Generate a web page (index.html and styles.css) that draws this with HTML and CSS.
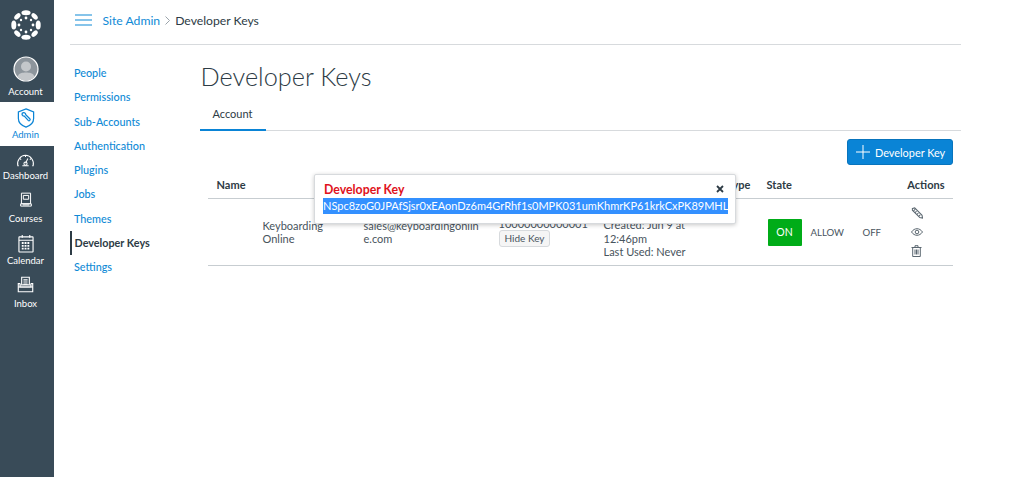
FILE: index.html
```html
<!DOCTYPE html>
<html lang="en">
<head>
<meta charset="utf-8">
<title>Developer Keys</title>
<link rel="stylesheet" href="styles.css">
</head>
<body>
<div class="app">
  <nav class="rail">
    <div class="rail-logo">
      <svg width="30" height="30" viewBox="0 0 30 30" fill="#fff">
        <g id="spokes">
          <ellipse cx="15" cy="2.800" rx="4.600" ry="2.500"/>
          <ellipse cx="15" cy="27.200" rx="4.600" ry="2.500"/>
          <ellipse cx="2.800" cy="15" rx="2.500" ry="4.600"/>
          <ellipse cx="27.200" cy="15" rx="2.500" ry="4.600"/>
          <ellipse cx="6.400" cy="6.400" rx="3.800" ry="2.300" transform="rotate(-45 6.400 6.400)"/>
          <ellipse cx="23.600" cy="6.400" rx="3.800" ry="2.300" transform="rotate(45 23.600 6.400)"/>
          <ellipse cx="6.400" cy="23.600" rx="3.800" ry="2.300" transform="rotate(45 6.400 23.600)"/>
          <ellipse cx="23.600" cy="23.600" rx="3.800" ry="2.300" transform="rotate(-45 23.600 23.600)"/>
          <circle cx="15" cy="8" r="1.400"/>
          <circle cx="15" cy="22" r="1.400"/>
          <circle cx="8" cy="15" r="1.400"/>
          <circle cx="22" cy="15" r="1.400"/>
          <circle cx="10" cy="10" r="1.200"/>
          <circle cx="20" cy="10" r="1.200"/>
          <circle cx="10" cy="20" r="1.200"/>
          <circle cx="20" cy="20" r="1.200"/>
        </g>
      </svg>
    </div>
    <a class="rail-item rail-account">
      <svg class="avatar" width="26" height="26" viewBox="0 0 26 26"><circle cx="13" cy="13" r="12" fill="#8d959c" stroke="#fff" stroke-width="1.200"/><circle cx="13" cy="10.500" r="5" fill="#c4c7ca"/><path d="M4.500 21c1-4 5-4.500 8.500-4.500s7.500.5 8.500 4.500a12 12 0 0 1-17 0z" fill="#c4c7ca"/></svg>
      <span>Account</span>
    </a>
    <a class="rail-item rail-active">
      <svg width="18" height="20" viewBox="0 0 18 21" fill="none" stroke="#0a84d6" stroke-width="1.300"><path d="M9 1l8 3v7c0 4-3.500 7.500-8 9-4.500-1.500-8-5-8-9V4z"/><path d="M5 5.500a2.200 2.200 0 0 1 3.500.5l.2 1 4.300 4.300a1.200 1.200 0 0 1-1.700 1.700L7.200 8.500 6 8.300A2.200 2.200 0 0 1 5 5.500z"/></svg>
      <span>Admin</span>
    </a>
    <a class="rail-item">
      <svg class="ic-dash" width="19" height="13" viewBox="0 0 24 15" fill="none" stroke="#fff" stroke-width="1.300"><path d="M3.500 14H2.300A10.500 10.500 0 0 1 12 1a10.500 10.500 0 0 1 9.700 13h-1.200M8 14h8"/><path d="M12 11l3-6M12 1v2M5 5l1.500 1.500M19 5l-1.500 1.500"/><circle cx="12" cy="11.500" r="2"/></svg>
      <span>Dashboard</span>
    </a>
    <a class="rail-item">
      <svg class="ic-course" width="14" height="16" viewBox="0 0 16 21" fill="none" stroke="#fff" stroke-width="1.300"><path d="M2 1.500h12v14H2zM1 15.500h14v3H1z"/><path d="M4.500 4.500h7v5h-7z"/><path d="M4 17h8"/></svg>
      <span>Courses</span>
    </a>
    <a class="rail-item">
      <svg class="ic-cal" width="16" height="19" viewBox="0 0 17 20" fill="none" stroke="#fff" stroke-width="1.200"><rect x="1" y="3" width="15" height="16" rx=".5"/><path d="M1 6.500h15M4.500 1v3M12.500 1v3"/><path d="M4 9.500h9M4 12.500h9M4 15.500h9" stroke-width="2" stroke-dasharray="2 1"/></svg>
      <span>Calendar</span>
    </a>
    <a class="rail-item">
      <svg class="ic-inbox" width="17" height="17" viewBox="0 0 19 20" fill="none" stroke="#fff" stroke-width="1.300"><path d="M5 10V1.500h9V10M7 4.500h5M7 7h5M7 9.500h5"/><path d="M3.500 9H1v9.500h17V9h-2.500M1 13h17"/><path d="M3 10.500h13V13H3z"/></svg>
      <span>Inbox</span>
    </a>
  </nav>
  <div class="page">
    <header class="crumbs">
      <svg class="burger" width="17" height="12" viewBox="0 0 17 12" fill="none" stroke="#0f8ad6" stroke-width="1.200"><path d="M0 1h17M0 6h17M0 11h17"/></svg>
      <a class="crumb-link">Site Admin</a>
      <svg class="crumb-sep" width="5" height="9" viewBox="0 0 5 9" fill="none" stroke="#9aa3aa"><path d="M.5.500l4 4-4 4"/></svg>
      <span class="crumb-here">Developer Keys</span>
    </header>
    <div class="body">
      <aside class="side">
        <a class="side-link">People</a>
        <a class="side-link">Permissions</a>
        <a class="side-link">Sub-Accounts</a>
        <a class="side-link">Authentication</a>
        <a class="side-link">Plugins</a>
        <a class="side-link">Jobs</a>
        <a class="side-link">Themes</a>
        <a class="side-link side-current">Developer Keys</a>
        <a class="side-link">Settings</a>
      </aside>
      <main class="main">
        <h1 class="title">Developer Keys</h1>
        <div class="tabs"><span class="tab">Account</span></div>
        <div class="toolbar">
          <button class="add-btn">
            <svg width="14" height="14" viewBox="0 0 14 14" stroke="#fff" stroke-width="1"><path d="M7 0v14M0 7h14"/></svg>
            Developer Key
          </button>
        </div>
        <div class="table">
          <div class="row head">
            <div class="c-name">Name</div>
            <div class="c-owner"></div>
            <div class="c-key"></div>
            <div class="c-dates c-type">Type</div>
            <div class="c-state">State</div>
            <div class="c-actions">Actions</div>
          </div>
          <div class="row data">
            <div class="c-name"><span class="name-text">Keyboarding Online</span></div>
            <div class="c-owner">sales@keyboardingonline.com</div>
            <div class="c-key">
              <div>10000000000001</div>
              <span class="hide-key">Hide Key</span>
            </div>
            <div class="c-dates">Created: Jun 9 at 12:46pm<br>Last Used: Never</div>
            <div class="c-state state-group">
              <span class="on">ON</span>
              <span class="allow">ALLOW</span>
              <span class="off">OFF</span>
            </div>
            <div class="c-actions icons">
              <svg width="12" height="12" viewBox="0 0 13 13" fill="none" stroke="#5b6770" stroke-width="1.100"><path d="M1.500 1.500l2.500-.5 8 8 .5 3-3-.5-8-8zM3 4l1.500-1.500M6 4.500L4.500 6M8 6.500L6.500 8M10 8.500L8.500 10" /></svg>
              <svg width="12" height="8" viewBox="0 0 12 8" fill="none" stroke="#5b6770"><path d="M.5 4C2 1.800 4 .7 6 .7S10 1.800 11.500 4C10 6.200 8 7.300 6 7.300S2 6.200.5 4z"/><circle cx="6" cy="4" r="1.800"/></svg>
              <svg width="11" height="12" viewBox="0 0 11 12" fill="none" stroke="#5b6770"><path d="M.5 2.500h10M4 2.500V.7h3v1.800M1.700 2.500v9h7.600v-9M4 4.500v5M5.500 4.500v5M7 4.500v5"/></svg>
            </div>
          </div>
        </div>
        <div class="popup">
          <div class="popup-head">
            <span class="popup-title">Developer Key</span>
            <svg class="popup-close" width="8" height="8" viewBox="0 0 8 8" stroke="#2d3b45" stroke-width="1.800"><path d="M1 1l6 6M7 1L1 7"/></svg>
          </div>
          <div class="popup-key"><span class="selected">NSpc8zoG0JPAfSjsr0xEAonDz6m4GrRhf1s0MPK031umKhmrKP61krkCxPK89MHL</span></div>
        </div>
      </main>
    </div>
  </div>
</div>
</body>
</html>
```
FILE: styles.css
```css
* { box-sizing: border-box; }
html, body { margin: 0; height: 100%; }
body { font-family: Lato, "Liberation Sans", sans-serif; color: #2d3b45; background: #fff; font-size: 12px; overflow: hidden; }
.app { display: flex; height: 477px; }
.rail { width: 54px; flex: none; background: #394b58; display: flex; flex-direction: column; align-items: stretch; }
.rail-logo { height: 50px; display: flex; align-items: center; justify-content: center; padding-right: 3px; }
.rail-item { height: 42.670px; display: flex; flex-direction: column; align-items: center; justify-content: flex-end; color: #fff; font-size: 9.500px; line-height: 12px; padding: 0 3px 6.500px 0; gap: 1px; }
.rail-account { height: 52px; padding-bottom: 4px; gap: 4px; }
.rail-active { height: 44px; background: #fff; color: #0a84d6; padding-bottom: 5px; }
.ic-dash { margin-bottom: 2px; }
.ic-course { margin-bottom: 4px; }
.ic-cal { margin-bottom: 1px; }
.ic-inbox { margin-bottom: 4px; }
.page { width: 907px; padding-left: 16px; display: flex; flex-direction: column; }
.crumbs { height: 45px; border-bottom: 1px solid #d7dadd; display: flex; align-items: center; padding-left: 4.500px; padding-bottom: 4px; font-size: 12.200px; }
.burger { margin-right: 11px; }
.crumb-link { color: #0f8ad6; }
.crumb-sep { margin: 0 5px 0 5px; }
.crumb-here { color: #2d3b45; }
.body { display: flex; }
.side { width: 129.500px; flex: none; padding-top: 16px; display: flex; flex-direction: column; }
.side-link { height: 24.300px; line-height: 24.300px; font-size: 10.800px; color: #0f8ad6; padding-left: 4px; font-weight: 500; white-space: nowrap; }
.side-current { color: #2d3b45; font-weight: 700; border-left: 2px solid #2d3b45; padding-left: 2.500px; }
.main { flex: 1; position: relative; }
.title { margin: 0 0 0 1px; font-weight: 300; font-size: 25.300px; line-height: 34px; padding-top: 14px; height: 50px; color: #2d3b45; }
.tabs { height: 36px; border-bottom: 1px solid #d7dadd; display: flex; align-items: flex-end; }
.tab { width: 66px; height: 36px; display: block; text-align: center; line-height: 37px; font-size: 11px; border-bottom: 2px solid #0a84d6; margin-bottom: -1px; }
.toolbar { display: flex; justify-content: flex-end; padding: 8px 8px 0 0; height: 47px; }
.add-btn { width: 106px; height: 26px; background: #0a84d6; border: 1px solid #0874bd; border-radius: 3px; color: #fff; font: 10.900px Lato, sans-serif; display: flex; align-items: center; gap: 5px; padding: 0 0 0 8px; margin-left: -1px; }
.table { margin: 0 8px; }
.row { display: flex; border-bottom: 1px solid #c7cdd1; }
.head { height: 21px; font-weight: 700; font-size: 11px; align-items: flex-start; line-height: 13px; }
.data { height: 67px; font-size: 11px; line-height: 13px; align-items: center; color: #48545d; }
.c-name { width: 148px; padding-left: 9px; flex: none; }
.name-text { display: block; margin-left: 46px; width: 80px; }
.c-owner { width: 144px; flex: none; overflow-wrap: anywhere; }
.data .c-owner { padding: 0 20px 0 8px; }
.c-key { width: 104px; flex: none; white-space: nowrap; margin-left: -1px; }
.c-key div { height: 13px; }
.hide-key { display: block; width: fit-content; height: 17px; line-height: 15px; padding: 0 5px; font-size: 10px; background: #f5f5f5; border: 1px solid #d7dadd; border-radius: 3px; }
.c-dates { width: 164px; flex: none; padding: 13px 50px 0 1px; line-height: 13.500px; }
.c-type { text-align: right; padding: 0 16px 0 0; }
.c-state { flex: none; width: 138px; }
.state-group { display: flex; align-items: center; font-size: 9.600px; padding-left: 1px; }
.on { width: 34px; height: 27px; background: #00ac18; color: #fff; display: flex; align-items: center; justify-content: center; border-radius: 1px; font-size: 10.500px; margin-right: 9px; }
.allow { width: 52px; }
.off { width: 20px; }
.c-actions { flex: none; text-align: right; padding-right: 5px; width: 45px; white-space: nowrap; }
.icons { display: flex; flex-direction: column; align-items: center; gap: 9px; padding: 0; width: 14px; position: relative; left: 5px; }
.popup { position: absolute; left: 114.500px; top: 128.500px; width: 421.500px; height: 50px; background: #fff; border: 1px solid #d7dadd; border-radius: 2px; box-shadow: 0 1px 4px rgba(0,0,0,.22); padding: 7px 8px 0; }
.popup-head { display: flex; justify-content: space-between; align-items: center; height: 15px; margin-bottom: 1px; padding-right: 3px; }
.popup-title { color: #e0121c; font-weight: 700; font-size: 12.300px; line-height: 15px; margin-left: 1px; }
.popup-key { font-size: 11px; line-height: 16px; white-space: nowrap; height: 16px; color: #fff; }
.selected { background: #3390ff; display: inline-block; height: 16px; }
```
